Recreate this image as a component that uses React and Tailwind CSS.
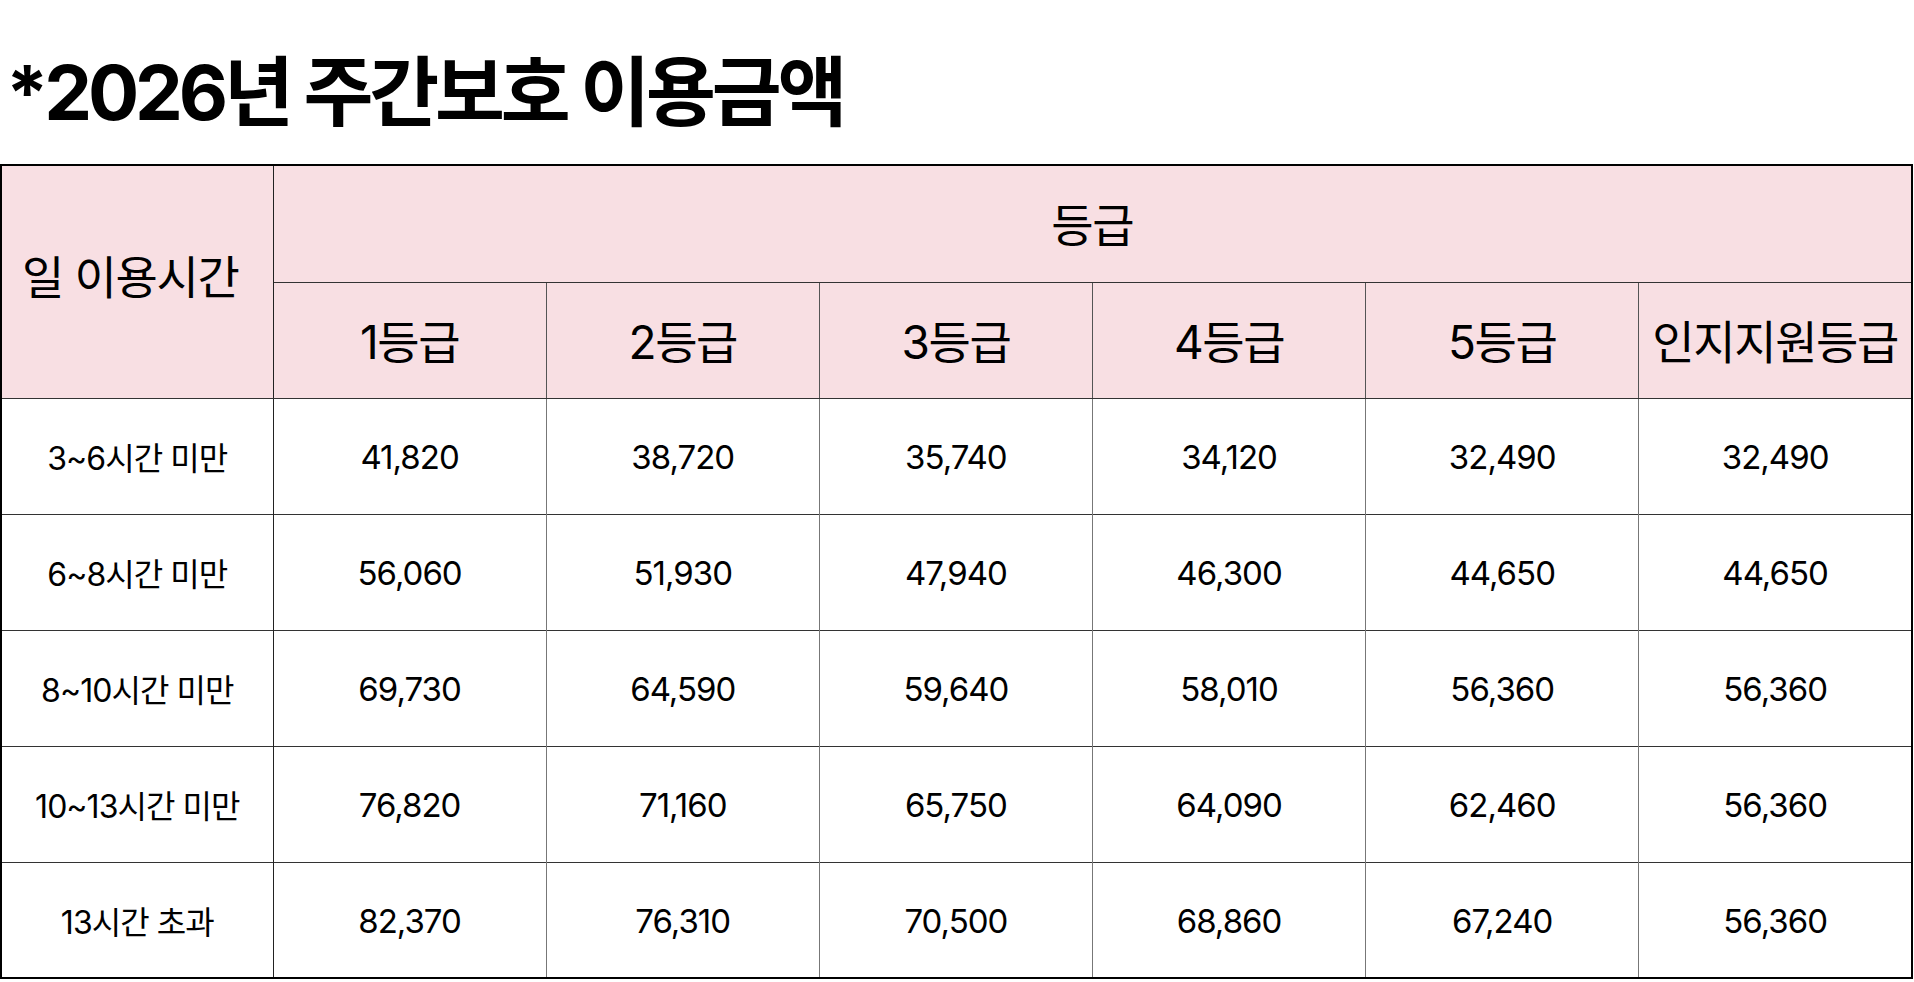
const grades = ["1등급", "2등급", "3등급", "4등급", "5등급", "인지지원등급"];

const rows = [
  { label: "3~6시간 미만", values: ["41,820", "38,720", "35,740", "34,120", "32,490", "32,490"] },
  { label: "6~8시간 미만", values: ["56,060", "51,930", "47,940", "46,300", "44,650", "44,650"] },
  { label: "8~10시간 미만", values: ["69,730", "64,590", "59,640", "58,010", "56,360", "56,360"] },
  { label: "10~13시간 미만", values: ["76,820", "71,160", "65,750", "64,090", "62,460", "56,360"] },
  { label: "13시간 초과", values: ["82,370", "76,310", "70,500", "68,860", "67,240", "56,360"] },
];

export default function App() {
  return (
    <div
      className="min-h-screen w-[1914px] bg-white text-black"
      style={{ fontFamily: '"Inter", "Noto Sans CJK KR", sans-serif' }}
    >
      {/* Title */}
      <div className="h-[164px] pl-[6px] pt-[54px]">
        <h1 className="text-[76px] font-bold leading-none tracking-[-0.055em]">
          *2026년 주간보호 이용금액
        </h1>
      </div>

      {/* Table */}
      <table className="w-[1913px] table-fixed border-collapse border-2 border-black">
        <colgroup>
          <col className="w-[272px]" />
          {grades.map((g) => (
            <col key={g} />
          ))}
        </colgroup>
        <thead>
          <tr className="h-[117px] bg-[#f8dfe3]">
            <th
              rowSpan={2}
              className="border border-r-[#222] border-b-[#333] pb-[8px] pr-[14px] text-[46px] font-normal tracking-[-0.03em]"
            >
              일 이용시간
            </th>
            <th
              colSpan={6}
              className="border-b border-[#333] pt-[4px] text-[46px] font-normal tracking-[-0.03em]"
            >
              등급
            </th>
          </tr>
          <tr className="h-[116px] bg-[#f8dfe3]">
            {grades.map((g, i) => (
              <th
                key={g}
                className={`border-b border-b-[#333] text-[46px] font-normal tracking-[-0.03em] ${
                  i < 5 ? "border-r border-r-[#555]" : ""
                }`}
              >
                <span className="relative top-[2px]">{g}</span>
              </th>
            ))}
          </tr>
        </thead>
        <tbody>
          {rows.map((row) => (
            <tr key={row.label} className="h-[116px] border-b border-[#333]">
              <td className="border-r border-[#222] pt-[6px] text-center text-[32px] font-normal tracking-[-0.03em]">
                {row.label}
              </td>
              {row.values.map((v, i) => (
                <td
                  key={i}
                  className={`pt-[4px] text-center text-[33px] tracking-[-0.03em] ${
                    i < 5 ? "border-r border-[#777]" : ""
                  }`}
                >
                  {v}
                </td>
              ))}
            </tr>
          ))}
        </tbody>
      </table>
    </div>
  );
}
